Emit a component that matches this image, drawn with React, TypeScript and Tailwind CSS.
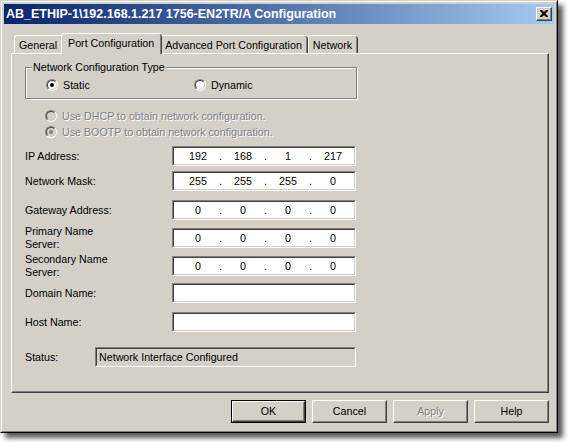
import React from "react";

const F = "font-['Liberation_Sans',Arial,sans-serif]";

function Sunken({ className = "", inner = "bg-white", children }: { className?: string; inner?: string; children?: React.ReactNode }) {
  return (
    <div className={`border border-t-[#808080] border-l-[#808080] border-r-white border-b-white ${className}`}>
      <div className={`w-full h-full border border-t-[#404040] border-l-[#404040] border-r-[#d4d0c8] border-b-[#d4d0c8] ${inner}`}>{children}</div>
    </div>
  );
}

function Radio({ checked, disabled }: { checked?: boolean; disabled?: boolean }) {
  return (
    <div className="w-[12px] h-[12px] rounded-full border border-t-[#808080] border-l-[#808080] border-r-white border-b-white shrink-0">
      <div
        className={`w-full h-full rounded-full border border-t-[#404040] border-l-[#404040] border-r-[#d4d0c8] border-b-[#d4d0c8] flex items-center justify-center ${
          disabled ? "bg-[#d4d0c8]" : "bg-white"
        }`}
      >
        {checked && <div className={`w-[4px] h-[4px] rounded-full ${disabled ? "bg-[#808080]" : "bg-black"}`} />}
      </div>
    </div>
  );
}

function Btn({ label, def, disabled }: { label: string; def?: boolean; disabled?: boolean }) {
  const body = (
    <div className="w-full h-full border border-t-white border-l-white border-r-[#404040] border-b-[#404040]">
      <div className="w-full h-full border border-t-[#d4d0c8] border-l-[#d4d0c8] border-r-[#808080] border-b-[#808080] flex items-center justify-center">
        <span className={disabled ? "text-[#808080] [text-shadow:1px_1px_0_#fff]" : ""}>{label}</span>
      </div>
    </div>
  );
  return def ? (
    <div className="w-[75px] h-[23px] border border-black">{body}</div>
  ) : (
    <div className="w-[75px] h-[23px]">{body}</div>
  );
}

function IpField({ parts }: { parts: string[] }) {
  return (
    <Sunken className="w-[184px] h-[20px]">
      <div className="flex h-full items-center pl-[5px]">
        {parts.map((p, i) => (
          <React.Fragment key={i}>
            <span className="w-[38px] text-center leading-[13px]">{p}</span>
            {i < 3 && <span className="w-[7px] text-center leading-[13px]">.</span>}
          </React.Fragment>
        ))}
      </div>
    </Sunken>
  );
}

function Row({ label, children, mt }: { label: React.ReactNode; children: React.ReactNode; mt: string }) {
  return (
    <div className={`flex items-center ml-[13px] h-[20px] ${mt}`}>
      <div className="w-[147px] leading-[13px]">{label}</div>
      {children}
    </div>
  );
}

function Tab({ label, selected }: { label: string; selected?: boolean }) {
  if (selected) {
    return (
      <div className="relative z-10 mx-[-2px] mb-[-1px] h-[21px] bg-[#d4d0c8] border-t border-l border-t-white border-l-white rounded-tl-[3px] rounded-tr-[3px] flex">
        <div className="h-full border-r border-r-[#404040] rounded-tr-[3px] flex">
          <div className="h-full border-r border-r-[#808080] px-[6px] pt-[3px] leading-[13px]">{label}</div>
        </div>
      </div>
    );
  }
  return (
    <div className="h-[18px] border-t border-l border-t-white border-l-white rounded-tl-[3px] rounded-tr-[3px] flex">
      <div className="h-full border-r border-r-[#404040] rounded-tr-[3px] flex">
        <div className="h-full border-r border-r-[#808080] px-[4px] pt-[3px] leading-[13px]">{label}</div>
      </div>
    </div>
  );
}

export default function App() {
  return (
    <div className={`w-[568px] h-[442px] bg-white ${F} text-[10.7px] text-black`}>
      <div className="w-[558px] h-[433px] shadow-[5px_5px_5px_rgba(0,0,0,0.65)] border border-t-[#d4d0c8] border-l-[#d4d0c8] border-r-black border-b-black bg-[#d4d0c8]">
        <div className="w-full h-full border border-t-white border-l-white border-r-[#808080] border-b-[#808080] p-[2px] flex flex-col">
          {/* Title bar */}
          <div className="h-[20px] shrink-0 bg-linear-to-r from-[#0a246a] to-[#a6caf0] flex items-center justify-between pl-[2px] pr-[2px]">
            <span className="text-white font-bold text-[12.5px] leading-[16px] whitespace-nowrap">
              AB_ETHIP-1\192.168.1.217 1756-EN2TR/A Configuration
            </span>
            <div className="w-[16px] h-[14px] border border-t-white border-l-white border-r-[#404040] border-b-[#404040] bg-[#d4d0c8]">
              <div className="w-full h-full border-r border-b border-r-[#808080] border-b-[#808080] flex items-center justify-center">
                <svg width="8" height="7" viewBox="0 0 8 7">
                  <path d="M0 0h2l2 2l2-2h2v1l-2.5 2.5l2.5 2.5v1h-2l-2-2l-2 2h-2v-1l2.5-2.5l-2.5-2.5z" fill="#000" />
                </svg>
              </div>
            </div>
          </div>

          {/* Tabs */}
          <div className="ml-[10px] mt-[9px] h-[20px] flex items-end">
            <Tab label="General" />
            <Tab label="Port Configuration" selected />
            <Tab label="Advanced Port Configuration" />
            <Tab label="Network" />
          </div>

          {/* Panel */}
          <div className="ml-[7px] w-[538px] h-[340px] border border-t-white border-l-white border-r-[#404040] border-b-[#404040]">
            <div className="w-full h-full border-r border-b border-r-[#808080] border-b-[#808080] flex flex-col">
              {/* Group box */}
              <div className="relative ml-[13px] mt-[13px] w-[332px] h-[32px] shrink-0 border border-[#808080] shadow-[1px_1px_0_#fff,inset_1px_1px_0_#fff]">
                <span className="absolute left-[6px] top-[-7px] px-[1px] bg-[#d4d0c8] leading-[13px] whitespace-nowrap">
                  Network Configuration Type
                </span>
                <div className="flex items-center ml-[20px] mt-[11px] h-[12px]">
                  <div className="w-[148px] flex items-center gap-[5px]">
                    <Radio checked />
                    <span className="leading-[13px]">Static</span>
                  </div>
                  <div className="flex items-center gap-[5px]">
                    <Radio />
                    <span className="leading-[13px]">Dynamic</span>
                  </div>
                </div>
              </div>

              <div className="flex items-center gap-[5px] ml-[33px] mt-[11px] h-[12px]">
                <Radio disabled />
                <span className="leading-[13px] text-[#808080] [text-shadow:1px_1px_0_#fff]">Use DHCP to obtain network configuration.</span>
              </div>
              <div className="flex items-center gap-[5px] ml-[33px] mt-[4px] h-[12px]">
                <Radio disabled checked />
                <span className="leading-[13px] text-[#808080] [text-shadow:1px_1px_0_#fff]">Use BOOTP to obtain network configuration.</span>
              </div>

              <Row label="IP Address:" mt="mt-[8px]">
                <IpField parts={["192", "168", "1", "217"]} />
              </Row>
              <Row label="Network Mask:" mt="mt-[5px]">
                <IpField parts={["255", "255", "255", "0"]} />
              </Row>
              <Row label="Gateway Address:" mt="mt-[9px]">
                <IpField parts={["0", "0", "0", "0"]} />
              </Row>
              <Row label={<>Primary Name<br />Server:</>} mt="mt-[8px]">
                <IpField parts={["0", "0", "0", "0"]} />
              </Row>
              <Row label={<>Secondary Name<br />Server:</>} mt="mt-[8px]">
                <IpField parts={["0", "0", "0", "0"]} />
              </Row>
              <Row label="Domain Name:" mt="mt-[7px]">
                <Sunken className="w-[184px] h-[20px]" />
              </Row>
              <Row label="Host Name:" mt="mt-[9px]">
                <Sunken className="w-[184px] h-[20px]" />
              </Row>

              <div className="flex items-center ml-[13px] mt-[15px] h-[20px]">
                <div className="w-[70px] leading-[13px]">Status:</div>
                <Sunken className="w-[261px] h-[20px]" inner="bg-[#d4d0c8]">
                  <div className="h-full flex items-center pl-[2px] leading-[13px] whitespace-nowrap">Network Interface Configured</div>
                </Sunken>
              </div>
            </div>
          </div>

          {/* Buttons */}
          <div className="ml-[7px] w-[538px] mt-[7px] flex justify-end gap-[6px]">
            <Btn label="OK" def />
            <Btn label="Cancel" />
            <Btn label="Apply" disabled />
            <Btn label="Help" />
          </div>
        </div>
      </div>
    </div>
  );
}
